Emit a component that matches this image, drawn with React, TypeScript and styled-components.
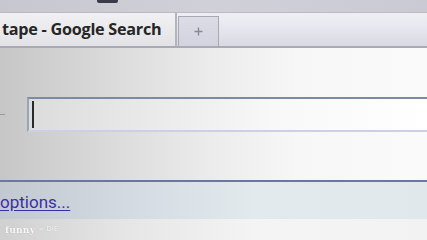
import React from "react";
import styled, { createGlobalStyle } from "styled-components";

const Global = createGlobalStyle`
  html, body { margin: 0; padding: 0; width: 427px; height: 240px; overflow: hidden; background: #e4e4e6; }
  #root { width: 427px; height: 240px; }
`;

const Page = styled.div`
  width: 427px;
  height: 240px;
  display: flex;
  flex-direction: column;
  overflow: hidden;
  font-family: "Open Sans", "Noto Sans", sans-serif;
`;

const TopStrip = styled.div`
  height: 12px;
  flex: none;
  background: linear-gradient(90deg, #c6c7cf 0%, #cfd0d8 50%, #c9cad3 100%);
  display: flex;
  align-items: flex-start;
  padding-left: 97px;
`;

const MenuMark = styled.div`
  width: 21px;
  height: 3px;
  background: #3a3a48;
  border-radius: 0 0 2px 2px;
`;

const TabBar = styled.div`
  height: 33px;
  flex: none;
  display: flex;
  align-items: flex-end;
  background: linear-gradient(180deg, #eeeef4 0%, #e8e8f0 40%, #d9d9e3 100%);
  border-top: 1px solid #b9bac4;
  border-bottom: 2px solid #a9aab4;
  box-sizing: content-box;
`;

const ActiveTab = styled.div`
  width: 177px;
  height: 33px;
  box-sizing: border-box;
  background: linear-gradient(180deg, #f1f1f3 0%, #e9e9ec 60%, #e2e2e6 100%);
  border-right: 2px solid #b4b4bc;
  display: flex;
  align-items: center;
  padding-left: 2px;
  padding-bottom: 1px;
  font-weight: 700;
  font-size: 16.2px;
  color: #262626;
  letter-spacing: -0.25px;
  white-space: nowrap;
`;

const NewTab = styled.div`
  width: 41px;
  height: 30px;
  box-sizing: border-box;
  margin-left: 1px;
  border: 1.5px solid #a8a8b2;
  border-bottom: none;
  background: linear-gradient(180deg, #dcdce6 0%, #d2d3de 100%);
  display: flex;
  align-items: center;
  justify-content: center;
`;

const Content = styled.div`
  flex: 1;
  display: flex;
  flex-direction: column;
  background: linear-gradient(90deg, #c6c6c6 0%, #dadada 25%, #ececec 50%, #f7f7f7 70%, #fafafa 100%);
  padding-top: 49px;
`;

const SearchRow = styled.div`
  display: flex;
  align-items: center;
`;

const Dash = styled.div`
  width: 5px;
  height: 1px;
  background: #9a9a9a;
  margin-right: 22px;
`;

const SearchBox = styled.div`
  flex: 1;
  height: 35px;
  box-sizing: border-box;
  margin-right: -10px;
  border: 1px solid #8d9aae;
  border-top: 2px solid #7d8aa2;
  border-bottom: 2px solid #c8d2e2;
  border-left: 2px solid #9aa6b8;
  background: linear-gradient(90deg, #dcdcdc 0%, #eaeaea 30%, #f8f8f8 60%, #ffffff 100%);
  display: flex;
  align-items: center;
  padding-left: 3px;
`;

const Caret = styled.div`
  width: 2px;
  height: 27px;
  background: #2a2a2a;
`;

const Divider = styled.div`
  height: 2px;
  flex: none;
  background: #6e74a6;
`;

const OptionsBar = styled.div`
  height: 37px;
  flex: none;
  box-sizing: border-box;
  background: linear-gradient(90deg, #c2c8d0 0%, #d6dde4 35%, #e2eaed 60%, #e0e8eb 100%);
  display: flex;
  align-items: center;
  padding-top: 2px;
`;

const OptionsLink = styled.a`
  margin-left: 0;
  font-family: "Roboto", "Liberation Sans", sans-serif;
  font-size: 17px;
  color: #3b2fa6;
  text-decoration: underline;
  text-underline-offset: 2px;
`;

const Footer = styled.div`
  height: 21px;
  flex: none;
  background: linear-gradient(90deg, #d0d0d0 0%, #e6e6e6 30%, #f4f4f4 60%, #f2f2f2 100%);
  display: flex;
  align-items: flex-start;
  padding: 6px 0 0 5px;
  box-sizing: border-box;
`;

const Watermark = styled.span`
  font-family: "DejaVu Serif", "Liberation Serif", serif;
  font-weight: 700;
  font-size: 9px;
  color: #ffffff;
  opacity: 0.9;
  text-shadow: 0 0 1px #9a9a9a;
  letter-spacing: 0.3px;
`;

const WatermarkSmall = styled.span`
  font-family: "DejaVu Sans", sans-serif;
  font-size: 7px;
  color: #ffffff;
  margin-left: 3px;
  text-shadow: 0 0 1px #9a9a9a;
`;

export default function App() {
  return (
    <>
      <Global />
      <Page>
        <TopStrip>
          <MenuMark />
        </TopStrip>
        <TabBar>
          <ActiveTab>tape - Google Search</ActiveTab>
          <NewTab>
            <svg width="9" height="9" viewBox="0 0 9 9">
              <path d="M4.5 0.5v8M0.5 4.5h8" stroke="#8a8a96" strokeWidth="1.4" />
            </svg>
          </NewTab>
        </TabBar>
        <Content>
          <SearchRow>
            <Dash />
            <SearchBox>
              <Caret />
            </SearchBox>
          </SearchRow>
        </Content>
        <Divider />
        <OptionsBar>
          <OptionsLink href="#">options...</OptionsLink>
        </OptionsBar>
        <Footer>
          <Watermark>funny</Watermark>
          <WatermarkSmall>∞ DIE</WatermarkSmall>
        </Footer>
      </Page>
    </>
  );
}
